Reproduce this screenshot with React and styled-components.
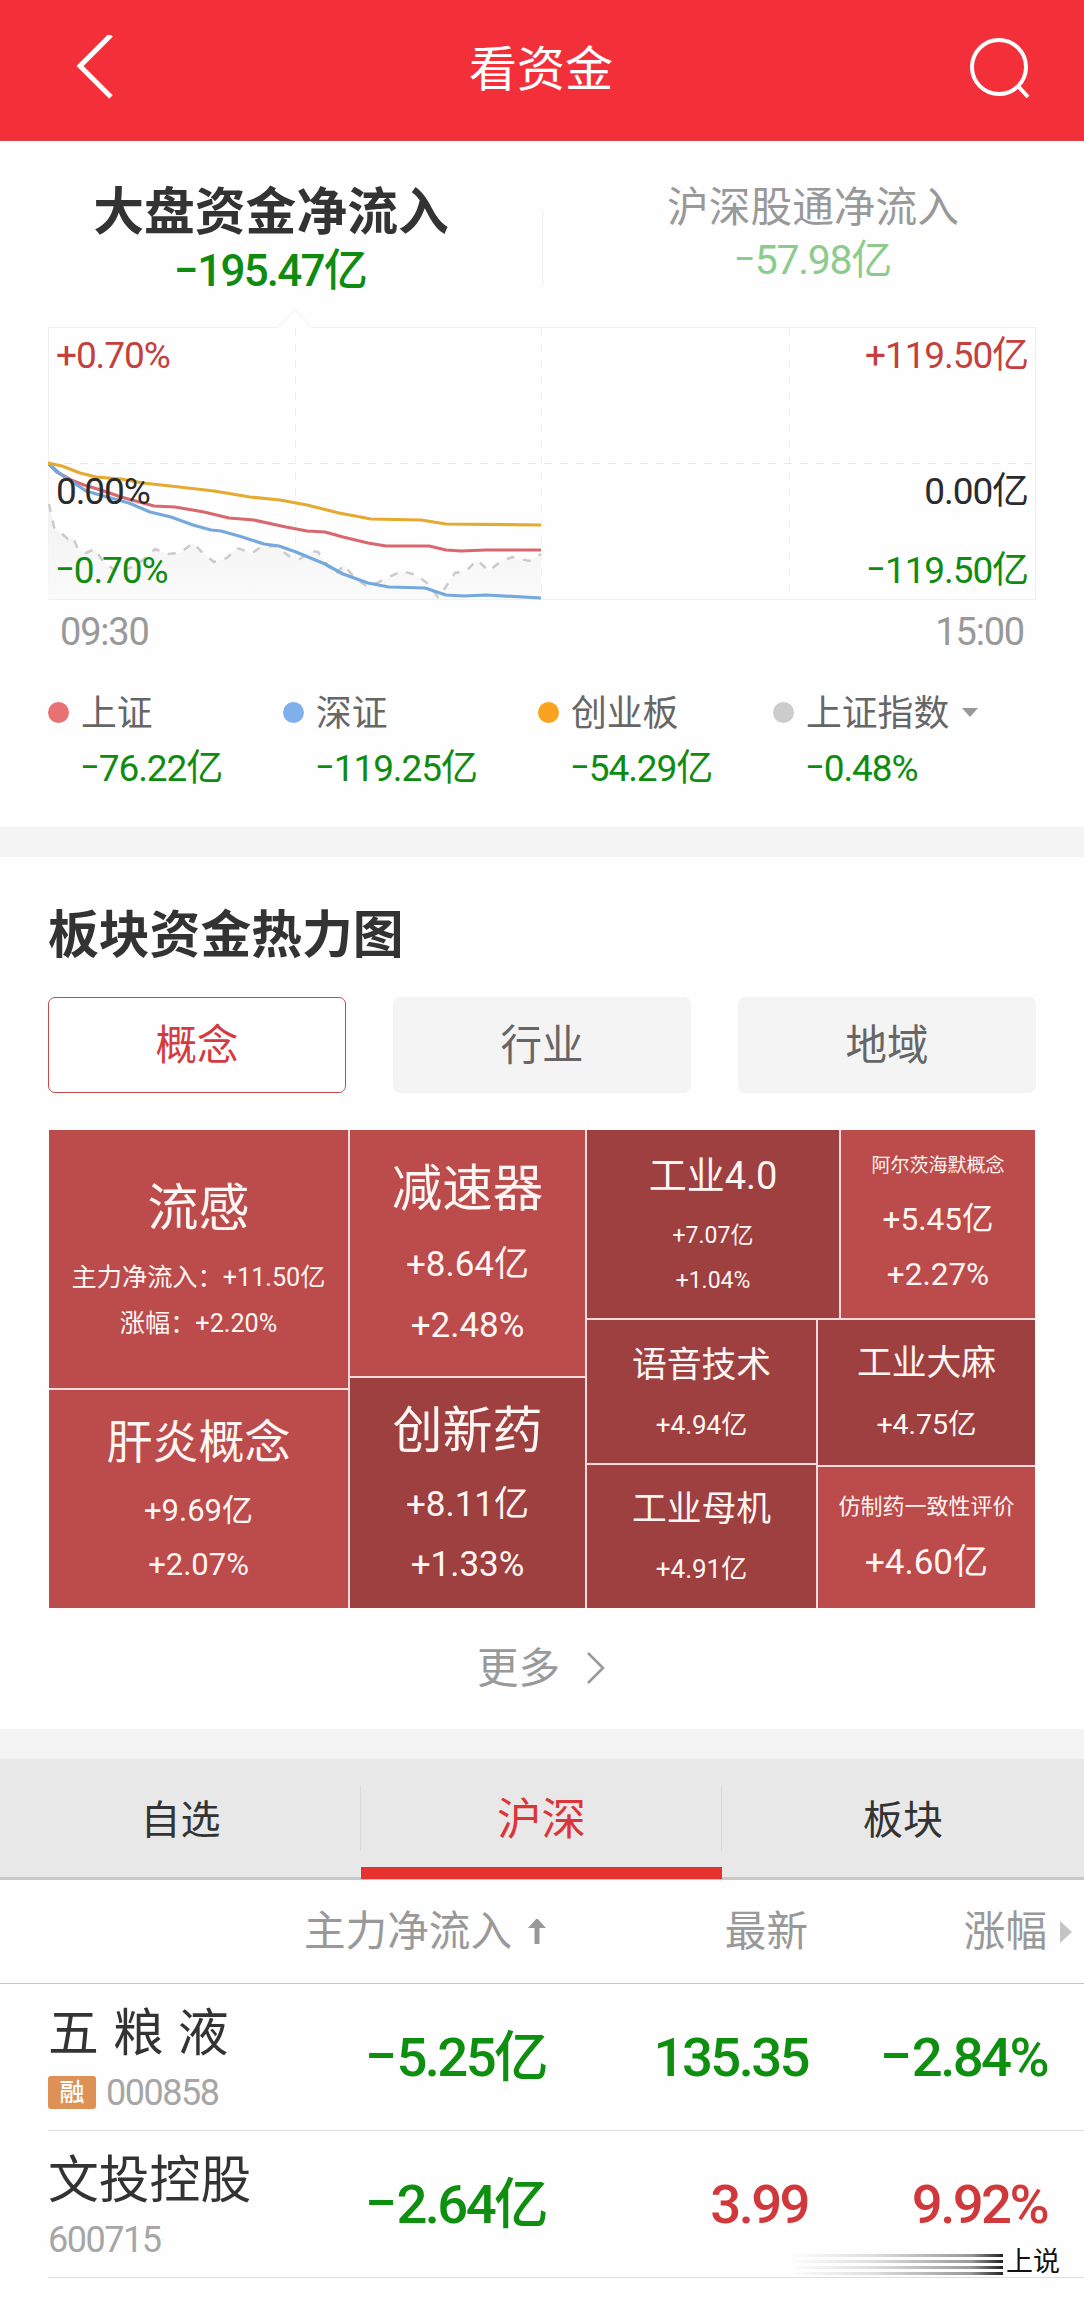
import { styled, createGlobalStyle } from "styled-components";

const GlobalStyle = createGlobalStyle`
* {
box-sizing: border-box;
}
body {
margin: 0;
background: #fff;
font-family: Roboto, "Noto Sans CJK SC", sans-serif;
color: #333;
white-space: nowrap;
}
`
const Page = styled.div`
width: 1084px;
height: 2299px;
overflow: hidden;
position: relative;
background: #fefefe;
`
const Header = styled.header`
display: flex;
align-items: center;
justify-content: space-between;
height: 141px;
padding: 0 52px 0 74px;
background: #f32f39;
border-bottom: 1px solid #d8434b;
`
const Title = styled.h1`
margin: 0;
color: #fff;
font-size: 48px;
font-weight: 400;
line-height: 60px;
`
const Overview = styled.section`
height: 686px;
`
const FlowTabs = styled.div`
display: flex;
height: 167px;
`
const FlowTab = styled.div`
display: flex;
flex-direction: column;
align-items: center;
flex: 1;
padding-top: ${p => p.$active ? "43px" : "42px"};
`
const FlowDivider = styled.div`
width: 1px;
height: 74px;
margin: 70px -1px 0 0;
background: #eee;
`
const FlowName = styled.div`
color: ${p => p.$active ? "#333" : "#999"};
font-size: ${p => p.$active ? "50.8px" : "41.7px"};
font-weight: ${p => p.$active ? 700 : 400};
line-height: ${p => p.$active ? "57px" : "50px"};
`
const FlowValue = styled.div`
color: ${p => p.$active ? "#0f8c0f" : "#8dcb8d"};
font-size: ${p => p.$active ? "44px" : "41px"};
font-weight: ${p => p.$active ? 500 : 400};
line-height: ${p => p.$active ? "60px" : "54px"};
letter-spacing: ${p => p.$active ? "-1.8px" : "-1.3px"};
`
const MinusSign = styled.span`
display: inline-block;
width: 0.48em;
text-align: center;
letter-spacing: 0;
transform: translateY(-0.07em) scaleX(1.6);
`
const Chart = styled.div`
position: relative;
height: 292px;
margin: 0 48px;
`
const ChartLabel = styled.div`
position: absolute;
top: ${p => p.$top}px;
${p => p.$right ? "right: 8px;" : "left: 8px;"}
color: ${p => p.$color};
font-size: 37px;
line-height: 40px;
letter-spacing: -1.1px;
`
const TimeAxis = styled.div`
display: flex;
justify-content: space-between;
padding: 0 60px;
color: #999;
font-size: 38px;
line-height: 64px;
letter-spacing: -1.2px;
`
const Legend = styled.div`
display: grid;
grid-template-columns: 235px 255px 235px 1fr;
margin: 25px 0 0 48px;
`
const LegendName = styled.div`
display: flex;
align-items: center;
color: #666;
font-size: 35.8px;
line-height: 50px;
`
const Dot = styled.span`
width: 21px;
height: 21px;
margin: -4px 12px 0 0;
border-radius: 50%;
background: ${p => p.$color};
`
const Caret = styled.span`
margin: -4px 0 0 13px;
border: 8px solid transparent;
border-top: 9px solid #999;
border-bottom: 0;
`
const LegendValue = styled.div`
padding-left: 33px;
color: #0f8c0f;
font-size: 37px;
line-height: 59px;
letter-spacing: -1.1px;
`
const Gap = styled.div`
height: 30px;
background: #f4f4f4;
`
const HeatSection = styled.section`
height: 872px;
padding: 46px 48px 0;
`
const Heading = styled.h2`
margin: 0;
font-size: 50.8px;
font-weight: 700;
line-height: 65px;
`
const Filters = styled.div`
display: grid;
grid-template-columns: repeat(3, 298px);
justify-content: space-between;
margin-top: 29px;
`
const Filter = styled.div`
height: 96px;
border: 1.5px solid ${p => p.$active ? "#c4484c" : "#f4f4f4"};
border-radius: 7px;
background: ${p => p.$active ? "#fff" : "#f4f4f4"};
color: ${p => p.$active ? "#d23c40" : "#666"};
font-size: 41.5px;
line-height: 95px;
text-align: center;
`
const HeatMap = styled.div`
display: flex;
gap: 2px;
width: 986px;
height: 478px;
margin: 37px 0 0 1px;
background: #f6dcdc;
`
const HeatColumn = styled.div`
display: flex;
flex-direction: column;
gap: 2px;
width: ${p => p.$width}px;
`
const HeatRow = styled.div`
display: flex;
gap: 2px;
`
const HeatCell = styled.div`
width: ${p => p.$width ? p.$width + "px" : "auto"};
height: ${p => p.$height}px;
padding-top: ${p => p.$pad}px;
background: ${p => p.$dark ? "#9e4040" : "#bc4b4b"};
color: #fff6f4;
text-align: center;
`
const HeatName = styled.div`
font-size: ${p => p.$size}px;
line-height: ${p => p.$line}px;
`
const HeatValue = styled.div`
font-size: ${p => p.$size}px;
line-height: ${p => p.$line}px;
`
const More = styled.div`
display: flex;
align-items: center;
justify-content: center;
gap: 27px;
height: 121px;
color: #999;
font-size: 41.5px;
line-height: 50px;
`
const Tabs = styled.div`
display: grid;
grid-template-columns: 361px 361px 362px;
height: 121px;
background: #e8e8e8;
box-shadow: inset 0 -3px #c9c9c9;
`
const Tab = styled.div`
height: 120px;
padding-top: 34px;
border-bottom: ${p => p.$active ? "12px solid #e5322f" : "0"};
color: ${p => p.$active ? "#dc3538" : "#333"};
font-size: ${p => p.$active ? "44.5px" : "40px"};
line-height: 55px;
text-align: center;
background: linear-gradient(#d9d9d9, #d9d9d9) right 27px / 1px 65px no-repeat;
&:last-child {
background: none;
}
`
const TableRow = styled.div`
display: grid;
grid-template-columns: 252px 246px 262px 239px;
align-items: center;
height: 147px;
margin-left: 48px;
border-bottom: 1px solid #dedede;
`
const TableHead = styled(TableRow)`
height: 104px;
margin: 0;
padding-left: 48px;
color: #999;
font-size: 41.6px;
line-height: 50px;
border-bottom: 1px solid #c6c6c6;
`
const HeadCell = styled.div`
display: flex;
align-items: center;
justify-content: flex-end;
gap: 16px;
`
const MoreColumns = styled.span`
margin: 0 -25px 0 -3px;
border: 11.5px solid transparent;
border-left: 12px solid #c4c4c4;
border-right: 0;
`
const Stock = styled.div`
align-self: start;
padding-top: 22px;
`
const StockName = styled.div`
font-size: 50.8px;
line-height: 56px;
word-spacing: 1.5px;
`
const StockCode = styled.div`
display: flex;
align-items: center;
gap: 10px;
height: 61px;
color: #a6a6a6;
font-size: 36px;
line-height: 40px;
letter-spacing: -1.5px;
`
const Badge = styled.span`
width: 48px;
height: 33px;
border-radius: 3px;
background: #dd9155;
color: #fff;
font-size: 25px;
font-weight: 500;
line-height: 33px;
letter-spacing: 0;
text-align: center;
`
const StockValue = styled.div`
color: ${p => p.$up ? "#d0383c" : "#0f8f0f"};
font-size: 54.5px;
font-weight: 500;
line-height: 60px;
letter-spacing: -2.6px;
text-align: right;
${MinusSign} {
width: 0.56em;
transform: translateY(-0.07em) scaleX(1.7);
}
`
const Watermark = styled.div`
position: absolute;
right: 24px;
bottom: 20px;
display: flex;
align-items: center;
gap: 3px;
color: #111;
font-size: 27px;
line-height: 34px;
text-shadow: 0 0 2px #fff, 1px 1px 0 #fff, -1px -1px 0 #fff;
`
const Streaks = styled.div`
display: grid;
gap: 3px;
width: 214px;
margin-top: 4px;
`
const Streak = styled.div`
height: 3px;
background: linear-gradient(90deg, transparent, #ddd 40%, #999 85%, #222);
`

const series = [
    { color: "#d8686e", points: "0,155 9,164 23,172 36,177 56,183 73,189 95,195 106,198 127,199 156,204 181,210 206,212 238,219 259,223 277,224 295,229 320,235 338,238 381,238 398,242 413,243 438,242 493,242" },
    { color: "#75a8dc", points: "0,155 11,165 23,173 38,183 59,189 81,195 102,204 123,209 145,217 163,222 173,223 191,228 216,236 231,238 248,244 277,256 295,266 320,275 341,279 377,280 398,287 416,288 438,287 493,290" },
    { color: "#e5aa30", points: "0,155 14,158 32,165 48,169 73,171 95,175 131,179 166,183 202,189 232,192 259,197 291,205 323,211 373,212 398,216 493,217" },
]
const indexPoints = "1,196 3,205 6,219 13,225 20,231 25,229 29,239 38,245 47,241 56,255 70,264 84,259 95,252 107,241 120,246 132,245 145,235 154,244 166,254 179,250 189,240 204,245 213,239 227,238 241,248 252,251 263,243 270,244 281,259 288,266 296,257 306,269 318,278 329,275 341,269 354,263 368,267 379,275 390,289 397,280 407,265 418,263 429,252 441,263 452,254 464,249 481,253 493,246"

const legend = [
    { name: "上证", value: "-76.22亿", color: "#e87174" },
    { name: "深证", value: "-119.25亿", color: "#7fb0ec" },
    { name: "创业板", value: "-54.29亿", color: "#faa31e" },
    { name: "上证指数", value: "-0.48%", color: "#ccc", caret: true },
]

const stocks = [
    { name: "五 粮 液", code: "000858", badge: "融", flow: "-5.25亿", price: "135.35", change: "-2.84%" },
    { name: "文投控股", code: "600715", flow: "-2.64亿", price: "3.99", change: "9.92%", up: true },
]

function Num({ children }) {
    if (children[0] !== "-") return children
    return <><MinusSign>-</MinusSign>{children.slice(1)}</>
}

function Cell({ name, values, size, line, valueSize, valueLine, ...rest }) {
    return (
        <HeatCell {...rest}>
            <HeatName $size={size} $line={line}>{name}</HeatName>
            {values.map(v => <HeatValue key={v} $size={valueSize} $line={valueLine}>{v}</HeatValue>)}
        </HeatCell>
    )
}

function FlowChart() {
    return (
        <Chart>
            <svg width="988" height="292" viewBox="0 0 988 292" fill="none">
                <defs>
                    <linearGradient id="area" x1="0" y1="0" x2="0" y2="1">
                        <stop offset="0" stopColor="#f2f2f2" />
                        <stop offset="1" stopColor="#fafafa" />
                    </linearGradient>
                </defs>
                <path d="M.5 19.5H230L247 1.5L264 19.5H987.5V291.5H.5Z" stroke="#f0f0f0" />
                <path d="M0 155.5H988" stroke="#e8e8e8" strokeDasharray="8 8" />
                <path d="M247.5 20V291M493.5 20V291M741.5 20V291" stroke="#f0f0f0" strokeDasharray="8 8" />
                <polygon points={`0,291 ${indexPoints} 493,291`} fill="url(#area)" />
                <polyline points={indexPoints} stroke="#cbcbcb" strokeWidth="2.5" strokeDasharray="8 9" />
                {series.map(s => (
                    <polyline key={s.color} points={s.points} stroke={s.color} strokeWidth="3.2" strokeLinejoin="round" />
                ))}
            </svg>
            <ChartLabel $top={28} $color="#c4403f">+0.70%</ChartLabel>
            <ChartLabel $top={164} $color="#2b2b2b">0.00%</ChartLabel>
            <ChartLabel $top={243} $color="#0f8c0f"><Num>-0.70%</Num></ChartLabel>
            <ChartLabel $top={28} $color="#c4403f" $right>+119.50亿</ChartLabel>
            <ChartLabel $top={164} $color="#2b2b2b" $right>0.00亿</ChartLabel>
            <ChartLabel $top={243} $color="#0f8c0f" $right><Num>-119.50亿</Num></ChartLabel>
        </Chart>
    )
}

function App() {
    return (
        <Page>
            <GlobalStyle />
            <Header>
                <svg width="40" height="70" viewBox="0 4 40 70" fill="none" stroke="#fff" strokeWidth="5">
                    <path d="M37 4L6 35L37 66" />
                </svg>
                <Title>看资金</Title>
                <svg width="64" height="64" viewBox="0 0 64 64" fill="none" stroke="#fff" strokeWidth="4">
                    <circle cx="31" cy="29" r="27" />
                    <path d="M50 48L60 59" />
                </svg>
            </Header>

            <Overview>
                <FlowTabs>
                    <FlowTab $active>
                        <FlowName $active>大盘资金净流入</FlowName>
                        <FlowValue $active><Num>-195.47亿</Num></FlowValue>
                    </FlowTab>
                    <FlowDivider />
                    <FlowTab>
                        <FlowName>沪深股通净流入</FlowName>
                        <FlowValue><Num>-57.98亿</Num></FlowValue>
                    </FlowTab>
                </FlowTabs>
                <FlowChart />
                <TimeAxis>
                    <span>09:30</span>
                    <span>15:00</span>
                </TimeAxis>
                <Legend>
                    {legend.map(item => (
                        <div key={item.name}>
                            <LegendName><Dot $color={item.color} />{item.name}{item.caret && <Caret />}</LegendName>
                            <LegendValue><Num>{item.value}</Num></LegendValue>
                        </div>
                    ))}
                </Legend>
            </Overview>
            <Gap />

            <HeatSection>
                <Heading>板块资金热力图</Heading>
                <Filters>
                    <Filter $active>概念</Filter>
                    <Filter>行业</Filter>
                    <Filter>地域</Filter>
                </Filters>
                <HeatMap>
                    <HeatColumn $width={299}>
                        <Cell $height={258} $pad={31.5} name="流感" size={51} line={93} values={["主力净流入：+11.50亿", "涨幅：+2.20%"]} valueSize={25.2} valueLine={46.5} />
                        <Cell $height={218} $pad={11} name="肝炎概念" size={46} line={83} values={["+9.69亿", "+2.07%"]} valueSize={31} valueLine={53.5} />
                    </HeatColumn>
                    <HeatColumn $width={235}>
                        <Cell $height={246} $pad={14} name="减速器" size={50.5} line={89.5} values={["+8.64亿", "+2.48%"]} valueSize={35} valueLine={61} />
                        <Cell $dark $height={230} $pad={9} name="创新药" size={50} line={88} values={["+8.11亿", "+1.33%"]} valueSize={35} valueLine={59.5} />
                    </HeatColumn>
                    <HeatColumn $width={448}>
                        <HeatRow>
                            <Cell $dark $width={252} $height={188} $pad={10} name="工业4.0" size={38} line={73} values={["+7.07亿", "+1.04%"]} valueSize={23} valueLine={45} />
                            <Cell $width={194} $height={188} $pad={10} name="阿尔茨海默概念" size={19} line={51.5} values={["+5.45亿", "+2.27%"]} valueSize={31.5} valueLine={55.5} />
                        </HeatRow>
                        <HeatRow>
                            <HeatColumn $width={229}>
                                <Cell $dark $height={143} $pad={9.5} name="语音技术" size={34.8} line={70} values={["+4.94亿"]} valueSize={26} valueLine={50} />
                                <Cell $dark $height={143} $pad={9} name="工业母机" size={34.8} line={70} values={["+4.91亿"]} valueSize={26} valueLine={50} />
                            </HeatColumn>
                            <HeatColumn $width={217}>
                                <Cell $dark $height={145} $pad={6.5} name="工业大麻" size={34.8} line={73} values={["+4.75亿"]} valueSize={28.5} valueLine={50} />
                                <Cell $height={141} $pad={7.5} name="仿制药一致性评价" size={22} line={63} values={["+4.60亿"]} valueSize={35} valueLine={50} />
                            </HeatColumn>
                        </HeatRow>
                    </HeatColumn>
                </HeatMap>
                <More>
                    更多
                    <svg width="20" height="34" viewBox="0 1 20 34" fill="none" stroke="#999" strokeWidth="2.6">
                        <path d="M1 2L16 17L1 32" />
                    </svg>
                </More>
            </HeatSection>
            <Gap />

            <Tabs>
                <Tab>自选</Tab>
                <Tab $active>沪深</Tab>
                <Tab>板块</Tab>
            </Tabs>
            <TableHead>
                <span />
                <HeadCell>
                    主力净流入
                    <svg width="18" height="26" viewBox="0 1 18 26" fill="#999">
                        <path d="M9 0L18 10H11.5V26H6.5V10H0Z" />
                    </svg>
                </HeadCell>
                <HeadCell>最新</HeadCell>
                <HeadCell>涨幅<MoreColumns /></HeadCell>
            </TableHead>
            {stocks.map(s => (
                <TableRow key={s.code}>
                    <Stock>
                        <StockName>{s.name}</StockName>
                        <StockCode>{s.badge && <Badge>{s.badge}</Badge>}{s.code}</StockCode>
                    </Stock>
                    <StockValue><Num>{s.flow}</Num></StockValue>
                    <StockValue $up={s.up}>{s.price}</StockValue>
                    <StockValue $up={s.up}><Num>{s.change}</Num></StockValue>
                </TableRow>
            ))}

            <Watermark>
                <Streaks>
                    <Streak />
                    <Streak />
                    <Streak />
                    <Streak />
                </Streaks>
                上说
            </Watermark>
        </Page>
    )
}

export default App;
